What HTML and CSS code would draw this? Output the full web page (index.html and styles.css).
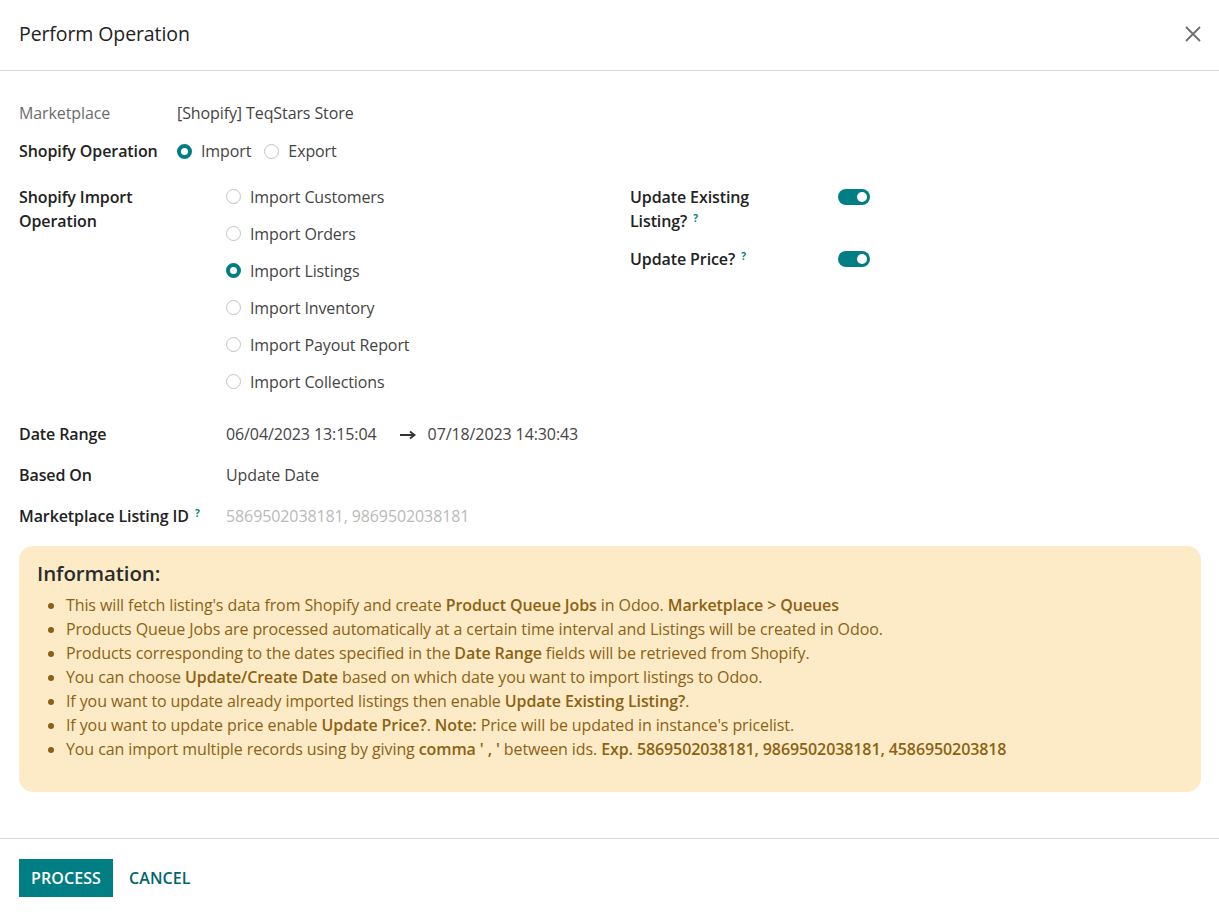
FILE: index.html
```html
<!DOCTYPE html>
<html lang="en">
<head>
  <meta charset="UTF-8">
  <meta name="viewport" content="width=device-width, initial-scale=1.0">
  <title>Perform Operation</title>
  <link rel="stylesheet" href="styles.css">
</head>
<body>
  <div class="modal">
    <header class="modal-header">
      <h4 class="modal-title">Perform Operation</h4>
      <button type="button" class="btn-close" aria-label="Close">
        <svg width="18" height="18" viewBox="0 0 18 18"><path d="M2 2 L16 16 M16 2 L2 16" stroke="#6f6f6f" stroke-width="1.8" fill="none"/></svg>
      </button>
    </header>

    <main class="modal-body">
      <div class="top-group">
        <div class="field-row">
          <span class="label muted">Marketplace</span>
          <span class="value">[Shopify] TeqStars Store</span>
        </div>
        <div class="field-row">
          <span class="label">Shopify Operation</span>
          <span class="value radio-inline">
            <label class="radio"><span class="radio-dot checked"></span>Import</label>
            <label class="radio"><span class="radio-dot"></span>Export</label>
          </span>
        </div>
      </div>

      <div class="import-group">
        <div class="import-label">
          <span class="label">Shopify Import<br>Operation</span>
        </div>
        <ul class="radio-list">
          <li class="radio"><span class="radio-dot"></span>Import Customers</li>
          <li class="radio"><span class="radio-dot"></span>Import Orders</li>
          <li class="radio"><span class="radio-dot checked"></span>Import Listings</li>
          <li class="radio"><span class="radio-dot"></span>Import Inventory</li>
          <li class="radio"><span class="radio-dot"></span>Import Payout Report</li>
          <li class="radio"><span class="radio-dot"></span>Import Collections</li>
        </ul>
        <div class="toggle-group">
          <div class="toggle-row">
            <span class="label toggle-label">Update Existing<br>Listing?<sup class="help">?</sup></span>
            <span class="switch on"><span class="knob"></span></span>
          </div>
          <div class="toggle-row">
            <span class="label toggle-label">Update Price?<sup class="help">?</sup></span>
            <span class="switch on"><span class="knob"></span></span>
          </div>
        </div>
      </div>

      <div class="date-group">
        <div class="field-row wide">
          <span class="label">Date Range</span>
          <span class="value">
            06/04/2023 13:15:04
            <svg class="range-arrow" width="16" height="10" viewBox="0 0 16 10"><path d="M0 5 H13 M10 1.5 L14.5 5 L10 8.5" stroke="#333" stroke-width="1.8" fill="none"/></svg>
            07/18/2023 14:30:43
          </span>
        </div>
        <div class="field-row wide">
          <span class="label">Based On</span>
          <span class="value">Update Date</span>
        </div>
        <div class="field-row wide">
          <span class="label">Marketplace Listing ID<sup class="help">?</sup></span>
          <span class="value placeholder">5869502038181, 9869502038181</span>
        </div>
      </div>

      <!-- Help text shown under the form -->
      <div class="alert-info-box">
        <h3>Information:</h3>
        <ul>
          <li>This will fetch listing's data from Shopify and create <b>Product Queue Jobs</b> in Odoo. <b>Marketplace &gt; Queues</b></li>
          <li>Products Queue Jobs are processed automatically at a certain time interval and Listings will be created in Odoo.</li>
          <li>Products corresponding to the dates specified in the <b>Date Range</b> fields will be retrieved from Shopify.</li>
          <li>You can choose <b>Update/Create Date</b> based on which date you want to import listings to Odoo.</li>
          <li>If you want to update already imported listings then enable <b>Update Existing Listing?</b>.</li>
          <li>If you want to update price enable <b>Update Price?</b>. <b>Note:</b> Price will be updated in instance's pricelist.</li>
          <li>You can import multiple records using by giving <b>comma ' , '</b> between ids. <b>Exp. 5869502038181, 9869502038181, 4586950203818</b></li>
        </ul>
      </div>
    </main>

    <footer class="modal-footer">
      <button type="button" class="btn btn-primary">Process</button>
      <button type="button" class="btn btn-link">Cancel</button>
    </footer>
  </div>
</body>
</html>
```

FILE: styles.css
```css
/* Reset */
* {
  box-sizing: border-box;
  margin: 0;
  padding: 0;
}

body {
  font-family: "Open Sans", "Noto Sans", sans-serif;
  font-size: 16px;
  line-height: 24px;
  color: #212529;
  background: #fff;
  letter-spacing: -0.1px;
}

/* Dialog frame */
.modal {
  width: 1219px;
  min-height: 916px;
}

.modal-header {
  height: 71px;
  display: flex;
  align-items: center;
  justify-content: space-between;
  padding: 0 17px 2px 19px;
  border-bottom: 1px solid #d8d8d8;
}

.modal-title {
  font-size: 19.5px;
  font-weight: 500;
  color: #222;
}

.btn-close {
  border: none;
  background: none;
  display: flex;
  cursor: pointer;
}

.modal-body {
  padding: 23px 18px 46px 19px;
}

/* Field rows */
.label {
  font-weight: 600;
  color: #222;
}

.label.muted {
  font-weight: 400;
  color: #6c6c6c;
}

.value {
  color: #444;
}

.value.placeholder {
  color: #b9b9b9;
}

.help {
  display: inline-block;
  color: #017e84;
  font-size: 10px;
  line-height: 10px;
  font-weight: 700;
  margin: 4px 0 0 6px;
  vertical-align: top;
}

.field-row {
  display: grid;
  grid-template-columns: 158px 1fr;
  padding: 7px 0;
}

.field-row.wide {
  grid-template-columns: 207px 1fr;
  padding: 8.5px 0;
}

/* Radios */
.radio {
  display: flex;
  align-items: center;
  color: #444;
}

.radio-inline {
  display: flex;
  gap: 13px;
}

.radio-dot {
  width: 15px;
  height: 15px;
  border-radius: 50%;
  border: 1px solid #c4c4c4;
  margin-right: 9px;
  background: #fff;
}

.radio-dot.checked {
  border: 4.5px solid #017e84;
}

.import-group {
  display: grid;
  grid-template-columns: 207px 404px 1fr;
  margin-top: 8px;
}

.import-label {
  padding: 7px 0;
}

.radio-list {
  list-style: none;
}

.radio-list li {
  height: 37px;
}

/* Boolean switches */
.toggle-row {
  display: grid;
  grid-template-columns: 208px auto;
  padding: 7px 0;
}

.switch {
  width: 32px;
  height: 16px;
  border-radius: 8px;
  background: #017e84;
  position: relative;
  margin-top: 4px;
}

.switch .knob {
  position: absolute;
  right: 3px;
  top: 3px;
  width: 10px;
  height: 10px;
  border-radius: 50%;
  background: #fff;
}

.date-group {
  margin-top: 13px;
}

.range-arrow {
  margin: 0 8px 0 19px;
  vertical-align: middle;
}

/* Information box */
.alert-info-box {
  margin-top: 10px;
  background: #fdebc8;
  border-radius: 14px;
  padding: 14px 18px 31px;
  color: #8c6212;
}

.alert-info-box h3 {
  font-size: 20.5px;
  line-height: 26px;
  font-weight: 600;
  color: #2b2b2b;
  margin-bottom: 7px;
}

.alert-info-box ul {
  padding-left: 29px;
}

.alert-info-box b {
  font-weight: 600;
}

/* Footer buttons */
.modal-footer {
  border-top: 1px solid #d8d8d8;
  padding: 20px 19px;
  display: flex;
  gap: 4px;
}

.btn {
  height: 38px;
  padding: 0 12px;
  font-family: inherit;
  font-size: 16px;
  font-weight: 600;
  letter-spacing: 0.1px;
  text-transform: uppercase;
  border: none;
  cursor: pointer;
}

.btn-primary {
  background: #017e84;
  color: #fff;
}

.btn-link {
  background: none;
  color: #01666b;
}
```
